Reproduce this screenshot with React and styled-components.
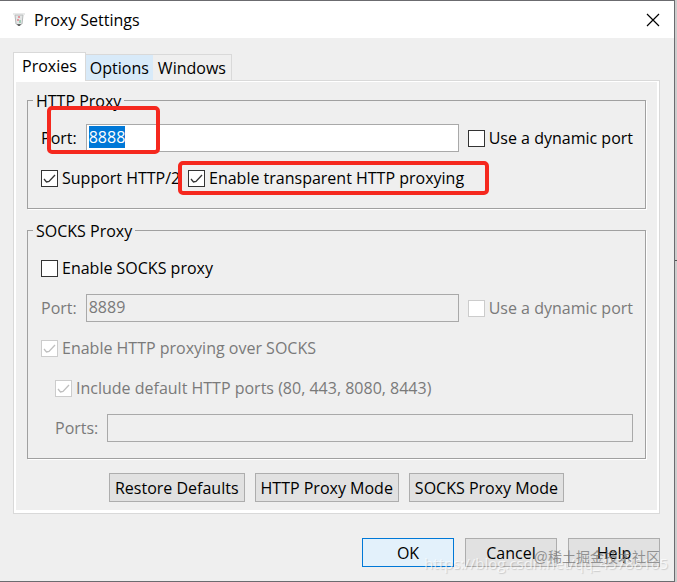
import React, { useEffect, useId, useRef, useState } from 'react';
import styled, { createGlobalStyle, css } from 'styled-components';

const GlobalStyle = createGlobalStyle`
  * {
    box-sizing: border-box;
  }
  body {
    margin: 0;
    background: #cdcdcd;
    color: #000;
    font-family: "Open Sans", "Noto Sans", "Noto Sans CJK SC", sans-serif;
    font-size: 16px;
    line-height: 20px;
  }
  button, input {
    font: inherit;
    color: inherit;
    margin: 0;
  }
`

// the 2px strip on the right is what shows of the window behind
const Desktop = styled.div`
  padding-right: 2px;
  background: linear-gradient(#cdcdcd 260px, #555 260px, #555 261px, #cdcdcd 261px);
`

const Dialog = styled.main`
  position: relative;
  border: solid #6b6b6f;
  border-width: 1px 1px 1px 0;
  background: #efefef;
`

const TitleBar = styled.header`
  display: flex;
  align-items: center;
  gap: 8px;
  height: 37px;
  padding: 0 12px;
  background: #fff;
`

const Title = styled.h1`
  flex: 1;
  margin: 0;
  font-size: 16px;
  font-weight: normal;
`

const CloseButton = styled.button`
  display: flex;
  padding: 2px;
  border: 0;
  background: none;
`

const TabList = styled.div`
  display: flex;
  align-items: flex-end;
  padding: 14px 13px 0;
`

const Tab = styled.button`
  height: 26px;
  padding: 0 4px;
  border: 1px solid #d9d9d9;
  border-width: 1px 0 0;
  background: ${props => props.$hover ? '#d8eaf9' : '#efefef'};
  &:last-child {
    padding: 0 5px;
    border-right-width: 1px;
  }
  ${props => props.$active && css`
    position: relative;
    height: 29px;
    margin-bottom: -1px;
    padding: 0 8px 3px;
    border-width: 1px 1px 0;
    background: #fff;
  `}
`

const Panel = styled.section`
  margin: 0 14px 0 13px;
  padding: 8px 13px 11px;
  border: 1px solid #d9d9d9;
  box-shadow: inset -2px -3px 0 #fff, inset 2px 1px 0 #fff;
`

const Group = styled.fieldset`
  display: flex;
  flex-direction: column;
  gap: 12px;
  min-width: 0;
  margin: 0 0 10px;
  padding: 13px 12px 16px 13px;
  border: 1px solid #a0a0a0;
  box-shadow: 1px 1px 0 #fff;
`

const Legend = styled.legend`
  margin-left: -8px;
  padding: 2px 3px 0;
`

const Row = styled.div`
  position: relative;
  display: flex;
  align-items: center;
  gap: 9px;
  min-height: 28px;
  padding-left: ${props => props.$indent ? '14px' : '0'};
  color: ${props => props.$muted ? '#7a7a7a' : '#000'};
`

const TextInput = styled.input`
  flex: 1;
  min-width: 0;
  height: 28px;
  padding: 0 2px 2px;
  border: 1px solid #a9a9a9;
  border-radius: 0;
  outline: none;
  background: #fff;
  caret-color: transparent;
  &:disabled {
    background: #efefef;
    color: #7a7a7a;
  }
  &::selection {
    background: #0078d7;
    color: #fff;
  }
`

const CheckLabel = styled.label`
  display: flex;
  align-items: center;
  gap: 4px;
  white-space: nowrap;
`

const CheckBox = styled.span`
  display: grid;
  width: 17px;
  height: 17px;
  input, svg {
    grid-area: 1 / 1;
    width: 17px;
    height: 17px;
  }
  input {
    appearance: none;
    border: 1px solid #333;
    background: #fff;
  }
  input:disabled {
    border-color: #ccc;
  }
  svg {
    pointer-events: none;
    visibility: hidden;
    stroke: #333;
  }
  input:checked + svg {
    visibility: visible;
  }
  input:disabled + svg {
    stroke: #bfbfbf;
  }
`

const PanelButtons = styled.div`
  display: flex;
  justify-content: center;
  gap: 10px;
  padding-top: 4px;
`

const DialogButtons = styled.footer`
  display: flex;
  justify-content: flex-end;
  gap: 11px;
  padding: 24px 14px 14px;
`

const Button = styled.button`
  height: 29px;
  min-width: ${props => props.$wide ? '92px' : '0'};
  padding: 0 5px;
  border: 1px solid ${props => props.$primary ? '#0078d7' : '#adadad'};
  background: ${props => props.$primary ? '#e3f1fb' : '#e1e1e1'};
`

// red frames drawn over the fields to point them out
const Highlight = styled.span`
  position: absolute;
  border: 4px solid #f5281e;
  border-radius: 5px;
  pointer-events: none;
`

const PortHighlight = styled(Highlight)`
  left: 6px;
  top: -18px;
  width: 113px;
  height: 48px;
`

const TransparentHighlight = styled(Highlight)`
  left: 137px;
  top: -3px;
  width: 311px;
  height: 34px;
`

const SupportCell = styled.div`
  width: 138px;
  overflow: hidden;
`

const LinkMark = styled.span`
  position: absolute;
  right: 6px;
  bottom: 8px;
  color: rgba(255, 255, 255, 0.7);
  text-shadow: 1px 1px 1px rgba(0, 0, 0, 0.15);
  font-size: 15px;
  pointer-events: none;
`

const SiteMark = styled.span`
  position: absolute;
  right: 14px;
  bottom: 14px;
  color: rgba(110, 110, 110, 0.7);
  font-family: "Liberation Sans", "Noto Sans CJK SC", sans-serif;
  font-size: 14px;
  pointer-events: none;
`

function JugIcon(){
  return(
    <svg width="14" height="16" viewBox="0 0 14 16" aria-hidden="true">
      <path d="M3 3 L11 3 L10 12 L7 13 L4 12 Z" fill="#e4e6e6" stroke="#b5b9b9"/>
      <path d="M1 2 H13" stroke="#d3d5d5"/>
      <path d="M5 12 H9 L8 14 H6 Z" fill="#666"/>
      <path d="M7 4 V6 M5 8 H7" stroke="#e08088" strokeWidth="1.5"/>
      <path d="M8 8 V11" stroke="#8fc4aa" strokeWidth="1.5"/>
    </svg>
  )
}

function Check({label, checked = false, disabled = false}){
  const id = useId()
  return(
    <CheckLabel htmlFor={id}>
      <CheckBox>
        <input id={id} type="checkbox" defaultChecked={checked} disabled={disabled}/>
        <svg viewBox="0 0 17 17" fill="none" strokeWidth="1.3" aria-hidden="true">
          <path d="M3 9 L5.5 12 L8 11.5 L14 5"/>
        </svg>
      </CheckBox>
      {label}
    </CheckLabel>
  )
}

const tabs = ['Proxies', 'Options', 'Windows']

export default function App(){
  const [active, setActive] = useState('Proxies')
  const port = useRef(null)

  useEffect(() => {
    port.current.focus()
    port.current.select()
  },[]);

  return (
    <>
      <GlobalStyle/>
      <Desktop>
        <Dialog>
          <TitleBar>
            <JugIcon/>
            <Title>Proxy Settings</Title>
            <CloseButton aria-label="Close">
              <svg width="14" height="14" viewBox="0 0 14 14" stroke="#000" strokeWidth="1.2" aria-hidden="true">
                <path d="M1 1 L13 13 M13 1 L1 13"/>
              </svg>
            </CloseButton>
          </TitleBar>

          <TabList role="tablist">
            {tabs.map(name => (
              <Tab key={name} role="tab" aria-selected={active === name} $active={active === name} $hover={name === 'Options'} onClick={() => setActive(name)}>{name}</Tab>
            ))}
          </TabList>

          <Panel>
            <Group>
              <Legend>HTTP Proxy</Legend>
              <Row>
                <label htmlFor="http-port">Port:</label>
                <TextInput ref={port} id="http-port" defaultValue="8888"/>
                <Check label="Use a dynamic port"/>
                <PortHighlight/>
              </Row>
              <Row>
                <SupportCell><Check label="Support HTTP/2" checked/></SupportCell>
                <Check label="Enable transparent HTTP proxying" checked/>
                <TransparentHighlight/>
              </Row>
            </Group>

            <Group>
              <Legend>SOCKS Proxy</Legend>
              <Row><Check label="Enable SOCKS proxy"/></Row>
              <Row $muted>
                <label htmlFor="socks-port">Port:</label>
                <TextInput id="socks-port" defaultValue="8889" disabled/>
                <Check label="Use a dynamic port" disabled/>
              </Row>
              <Row $muted><Check label="Enable HTTP proxying over SOCKS" checked disabled/></Row>
              <Row $muted $indent><Check label="Include default HTTP ports (80, 443, 8080, 8443)" checked disabled/></Row>
              <Row $muted $indent>
                <label htmlFor="extra-ports">Ports:</label>
                <TextInput id="extra-ports" disabled/>
              </Row>
            </Group>

            <PanelButtons>
              <Button>Restore Defaults</Button>
              <Button>HTTP Proxy Mode</Button>
              <Button>SOCKS Proxy Mode</Button>
            </PanelButtons>
          </Panel>

          <DialogButtons>
            <Button $wide $primary>OK</Button>
            <Button $wide>Cancel</Button>
            <Button $wide>Help</Button>
          </DialogButtons>

          <LinkMark>https://blog.csdn.net/qq_45788165</LinkMark>
          <SiteMark>@稀土掘金技术社区</SiteMark>
        </Dialog>
      </Desktop>
    </>
  );
};
